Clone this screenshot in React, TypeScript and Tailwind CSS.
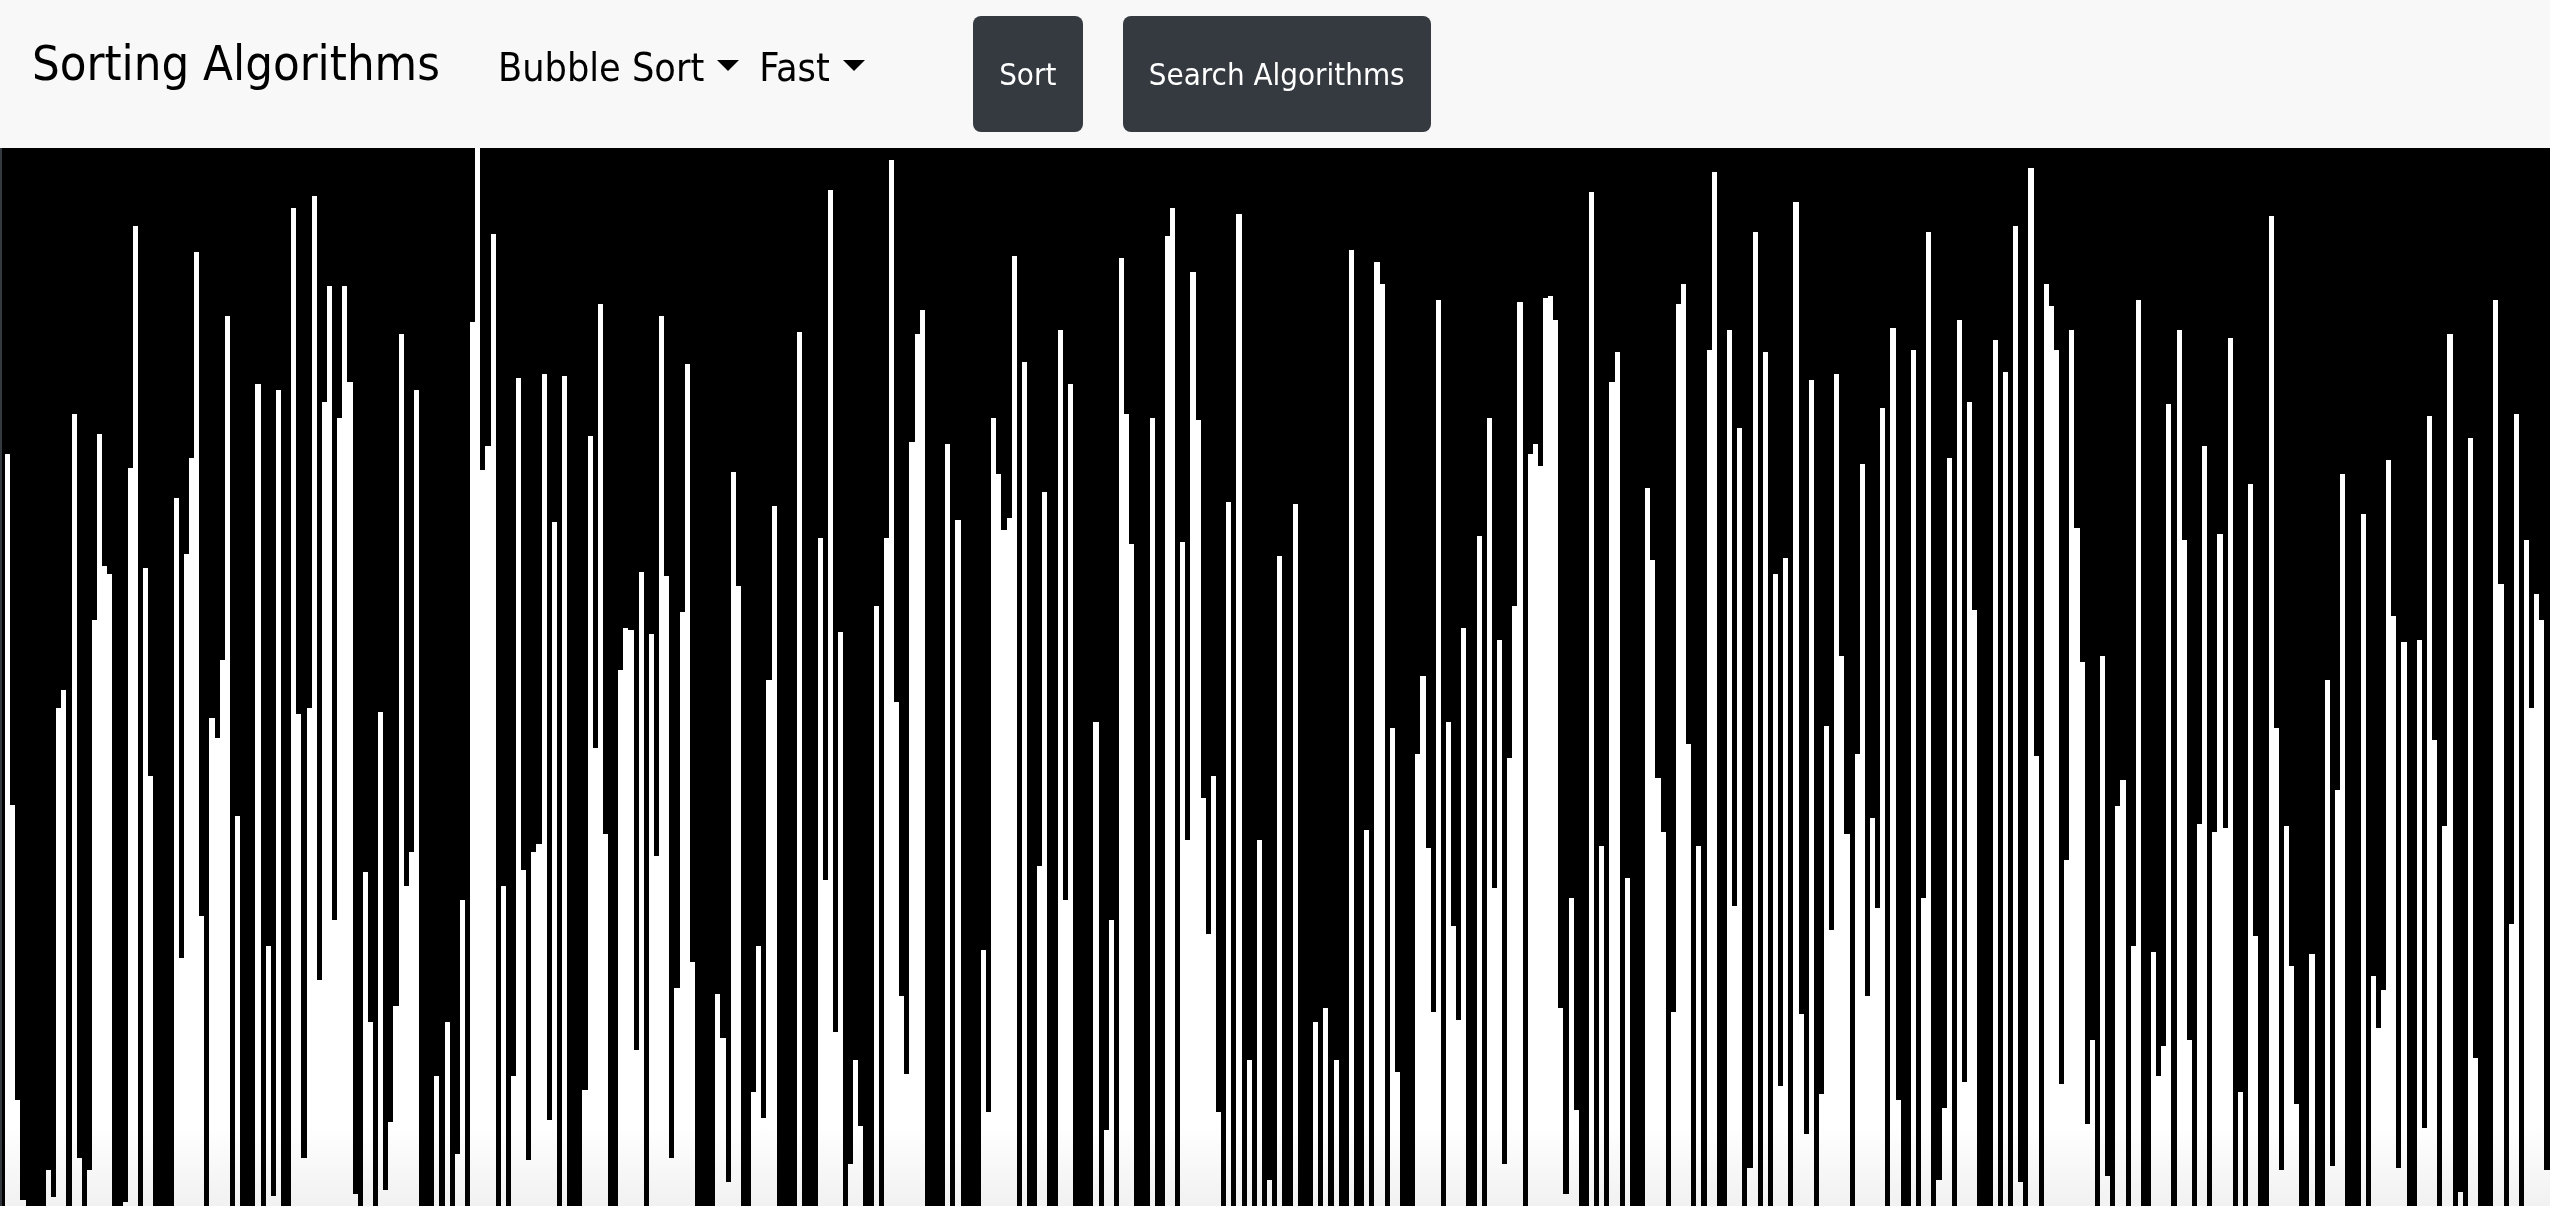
// App.tsx
const N = 1568;

// bar tops, measured down from the top of the chart on a 0-1568 scale
const tops = [
  N, 454, 974, 1411, 1559, N, N, N, N, 1515,
  1555, 830, 803, N, 394, 1497, N, 1515, 700, 424,
  619, 631, N, N, 1562, 474, 116, N, 622, 931,
  N, N, N, N, 519, 1200, 602, 459, 154, 1138,
  N, 845, 874, 759, 249, N, 990, N, N, N,
  350, N, 1183, 1553, 359, N, N, 89, 839, 1497,
  830, 71, 1233, 376, 205, 1144, 400, 205, 347, 1550,
  N, 1073, 1295, N, 836, 1544, 1444, 1272, 276, 1094,
  1043, 359, N, N, N, 1375, N, 1295, N, 1491,
  1114, N, 258, 0, 477, 441, 127, N, 1094, N,
  1375, 341, 1070, 1500, 1043, 1032, 335, 1441, 554, N,
  338, N, N, N, 1396, 427, 889, 231, 1017, N,
  N, 774, 711, 714, 1337, 628, N, 720, 1049, 249,
  634, 1497, 1245, 688, 320, 1206, N, N, N, N,
  1254, 1319, 1532, 480, 649, N, N, 1399, 1183, 1438,
  788, 531, N, N, N, N, 273, N, N, N,
  578, 1085, 62, 1310, 717, N, 1506, 1352, 1449, N,
  N, 679, N, 578, 18, 821, 1257, 1372, 436, 276,
  240, N, N, N, N, 439, N, 551, N, N,
  N, N, 1189, 1429, 400, 483, 566, 548, 160, N,
  317, N, N, 1064, 510, N, N, 270, 1114, 350,
  N, N, N, N, 851, N, 1455, 1144, N, 163,
  394, 587, N, N, N, 400, N, N, 130, 89,
  N, 584, 1026, 184, 403, 963, 1165, 931, 1429, N,
  525, N, 98, N, 1352, N, 1026, N, 1529, N,
  605, N, N, 528, N, N, N, 1295, N, 1275,
  N, 1352, N, N, 151, N, N, 1011, N, 169,
  202, N, 860, 1369, N, N, N, 898, 783, 1037,
  1280, 225, N, 851, 1153, 1292, 711, N, N, 575,
  N, 400, 1097, 729, 1506, 904, 679, 228, N, 454,
  439, 471, 222, 219, 255, 1275, 1550, 1112, 1426, N,
  N, 65, N, 1034, N, 347, 302, N, 1082, N,
  N, N, 504, 611, 934, 1014, N, 1280, 231, 202,
  883, N, 1034, N, 299, 36, N, N, 270, 1123,
  415, N, 1512, 124, N, 302, N, 631, 1390, 608,
  N, 80, 1283, 1461, 344, N, 1402, 857, 1159, 335,
  753, 1017, N, 898, 468, 1257, 993, 1126, 385, N,
  267, 1411, N, N, 299, N, 1112, 124, N, 1529,
  1423, 459, N, 255, 1384, 376, 685, N, N, N,
  285, N, 332, N, 116, 1532, N, 30, 901, N,
  202, 234, 299, 1387, 1055, 270, 563, 762, 1446, 1322,
  N, 753, 1524, N, 975, 937, N, 1183, 225, N,
  N, 1192, 1375, 1331, 379, N, 270, 581, 1322, N,
  1002, 442, N, 1014, 572, 1008, 282, N, 1399, N,
  498, 1168, N, N, 101, 860, 1515, 1005, 1212, 1417,
  N, N, 1195, N, N, 788, 1509, 951, 483, N,
  N, N, 542, N, 1227, 1304, 1248, 462, 694, 1512,
  732, N, N, 729, 1452, 397, 877, N, 1005, 276,
  N, 1547, N, 430, 1349, N, N, N, 225, 646,
  N, 1150, 394, N, 581, 830, 661, 700, 1515,
];

function Dropdown({ label }: { label: string }) {
  return (
    <button className="flex items-center text-[39.2px] leading-[54px] text-black">
      {label}
      <span className="ml-[13px] mb-[6px] h-0 w-0 border-x-[11px] border-t-[11px] border-x-transparent border-t-black" />
    </button>
  );
}

export default function App() {
  return (
    <div className="flex h-screen flex-col overflow-hidden bg-black font-['DejaVu_Sans',sans-serif] font-stretch-condensed">
      <nav className="flex h-[148px] shrink-0 bg-[#f8f8f8] pl-[32px]">
        <a className="mt-[27px] text-[48.6px] leading-[72px] text-black">Sorting Algorithms</a>
        <div className="ml-[58px] mt-[41px] flex h-[54px] gap-[20px]">
          <Dropdown label="Bubble Sort" />
          <Dropdown label="Fast" />
        </div>
        <button className="ml-[108px] mt-[16px] h-[116px] w-[110px] rounded-[8px] bg-[#343a40] text-[31px] text-white">
          Sort
        </button>
        <button className="ml-[40px] mt-[16px] h-[116px] w-[308px] rounded-[8px] bg-[#343a40] text-[31px] text-white">
          Search Algorithms
        </button>
      </nav>

      <main className="relative flex min-h-0 flex-1 items-end">
        {tops.map((top, i) => (
          <div key={i} className="min-w-0 flex-1 bg-white" style={{ height: `${(N - top) / 15.68}%` }} />
        ))}
        <div className="absolute inset-y-0 left-0 w-[2px] bg-[#343a40]" />
        <div className="absolute inset-x-0 bottom-0 h-[80px] bg-gradient-to-b from-white to-[#f1f1f1] mix-blend-multiply" />
      </main>
    </div>
  );
}
